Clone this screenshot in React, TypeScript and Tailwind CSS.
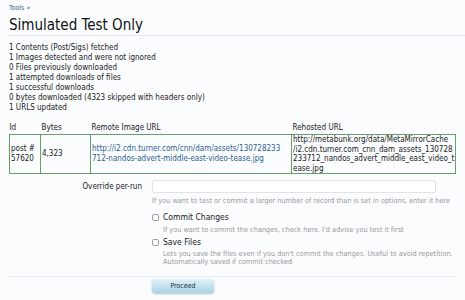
import React from "react";

const font = { fontFamily: '"DejaVu Sans Condensed", "DejaVu Sans", Verdana, sans-serif' };

export default function App() {
  const stats = [
    "1 Contents (Post/Sigs) fetched",
    "1 Images detected and were not ignored",
    "0 Files previously downloaded",
    "1 attempted downloads of files",
    "1 successful downloads",
    "0 bytes downloaded (4323 skipped with headers only)",
    "1 URLS updated",
  ];
  return (
    <div style={font} className="w-[465px] h-[300px] bg-[#fbfcfe] text-[#1a1a1a] overflow-hidden px-[9px] pt-[3px]">
      <div className="text-[7px] leading-[10px] text-[#3b5d8a]">Tools »</div>
      <h1 className="text-[15px] leading-[18px] mt-[3px] text-[#111]">Simulated Test Only</h1>
      <div className="h-px bg-[#e3e9ef] mt-[1px] mr-[-9px]" />
      <div className="mt-[7px] text-[8px] leading-[10px]">
        {stats.map((s) => (
          <div key={s}>{s}</div>
        ))}
      </div>
      <table className="mt-[10px] border-collapse text-[8px] leading-[10px] w-[446px] table-fixed">
        <colgroup>
          <col className="w-[31px]" />
          <col className="w-[50px]" />
          <col className="w-[201px]" />
          <col className="w-[164px]" />
        </colgroup>
        <thead>
          <tr className="text-left">
            <th className="font-normal p-0 pb-[1px] align-bottom">Id</th>
            <th className="font-normal p-0 pl-[1px] pb-[1px] align-bottom">Bytes</th>
            <th className="font-normal p-0 pl-[1px] pb-[1px] align-bottom">Remote Image URL</th>
            <th className="font-normal p-0 pl-[1px] pb-[1px] align-bottom">Rehosted URL</th>
          </tr>
        </thead>
        <tbody>
          <tr>
            <td className="border border-[#67a067] p-0 pl-[1px] align-middle">post #<br />57620</td>
            <td className="border border-[#67a067] p-0 pl-[1px] align-middle">4,323</td>
            <td className="border border-[#67a067] p-0 pl-[1px] align-middle text-[#2c5f8f]">
              http://i2.cdn.turner.com/cnn/dam/assets/130728233<br />712-nandos-advert-middle-east-video-tease.jpg
            </td>
            <td className="border border-[#67a067] p-0 pl-[1px] align-middle leading-[9.6px]">
              http://metabunk.org/data/MetaMirrorCache<br />/i2.cdn.turner.com_cnn_dam_assets_130728<br />233712_nandos_advert_middle_east_video_t<br />ease.jpg
            </td>
          </tr>
        </tbody>
      </table>

      <div className="mt-[6px] flex">
        <div className="w-[133px] text-right text-[8px] leading-[13px]">Override per-run</div>
        <div className="ml-[10px]">
          <div className="w-[284px] h-[13px] border border-[#dfe3e8] rounded-[2px] bg-white" />
          <div className="mt-[3px] text-[7.3px] leading-[9px] text-[#9a9a9a] whitespace-nowrap">
            If you want to test or commit a larger number of record than is set in options, enter it here
          </div>
        </div>
      </div>

      <div className="ml-[143px] mt-[6px]">
        <label className="flex items-center gap-[4px] text-[8.5px] leading-[12px]">
          <span className="w-[7px] h-[7px] border border-[#9aa0a6] rounded-[2px] bg-white shrink-0" />
          Commit Changes
        </label>
        <div className="ml-[11px] mt-[2px] text-[7.3px] leading-[9px] text-[#9a9a9a]">
          If you want to commit the changes, check here. I'd advise you test it first
        </div>
        <label className="mt-[2px] flex items-center gap-[4px] text-[8.5px] leading-[12px]">
          <span className="w-[7px] h-[7px] border border-[#9aa0a6] rounded-[2px] bg-white shrink-0" />
          Save Files
        </label>
        <div className="ml-[11px] mt-[2px] text-[7.3px] leading-[8px] text-[#9a9a9a] whitespace-nowrap">
          Lets you save the files even if you don't commit the changes. Useful to avoid repetition.
          <br />
          Automatically saved if commit checked
        </div>
      </div>

      <div className="h-px bg-[#e2eef2] mt-[10px] mr-[-1px]" />
      <div className="ml-[143px] mt-[2px]">
        <button className="block w-[62px] h-[14px] rounded-[3px] bg-gradient-to-b from-[#e0f1f8] to-[#a9d5e7] text-[7px] leading-[14px] text-[#1d2e3a] shadow-[0_1px_2px_rgba(0,0,0,0.25)]">
          Proceed
        </button>
      </div>
    </div>
  );
}
